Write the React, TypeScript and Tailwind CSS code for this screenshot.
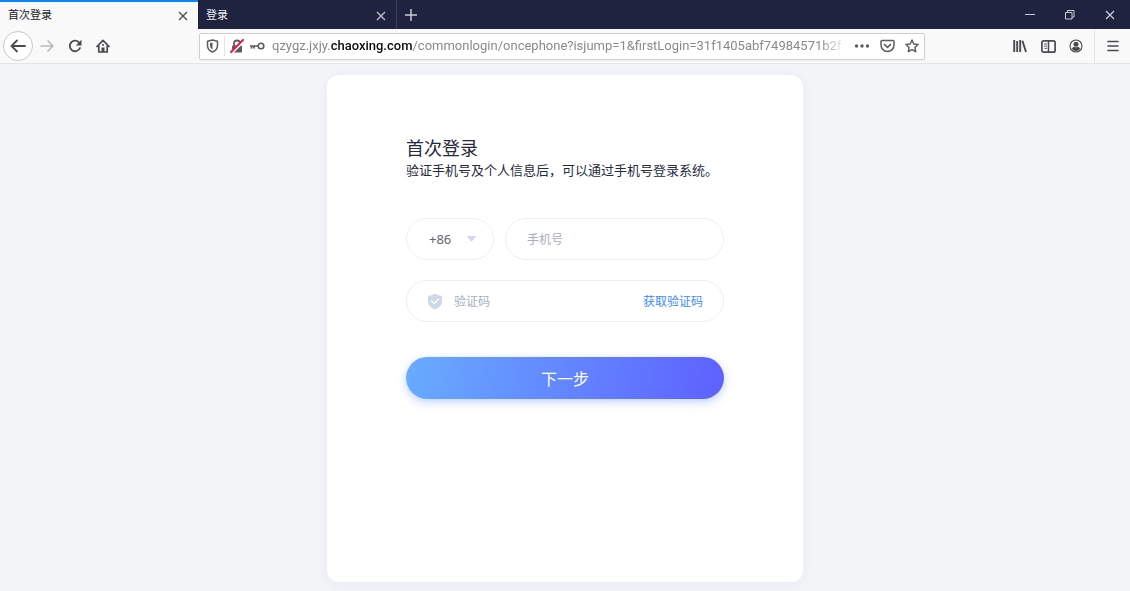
import { useState } from 'react';
import type { ButtonHTMLAttributes, FormEvent } from 'react';
import { clsx } from 'clsx';

// ============================================================================
// Types
// ============================================================================

interface IconButtonProps extends ButtonHTMLAttributes<HTMLButtonElement> {
    label: string;
}

interface TabProps {
    title: string;
    active: boolean;
    onSelect: () => void;
}

// ============================================================================
// Browser chrome
// ============================================================================

function IconButton({ label, className, children, ...rest }: IconButtonProps) {
    return (
        <button
            type="button"
            aria-label={label}
            className={clsx('flex shrink-0 items-center justify-center', className)}
            {...rest}
        >
            {children}
        </button>
    );
}

function CloseIcon() {
    return (
        <svg width="10" height="10" viewBox="0 0 10 10" fill="none" stroke="currentColor" strokeWidth="1.3">
            <path d="M1 1l8 8M9 1L1 9" />
        </svg>
    );
}

function Tab({ title, active, onSelect }: TabProps) {
    return (
        <div
            className={clsx(
                'flex w-[198px] items-center border-t-2 pr-2.5 pl-2 text-[11px]',
                active
                    ? 'border-[#0a84ff] bg-[#f9f9fa] text-[#18191a]'
                    : 'border-[#202340] text-[#f0f0f5]'
            )}
        >
            <button
                type="button"
                role="tab"
                aria-selected={active}
                onClick={onSelect}
                className="h-full flex-1 pb-1 text-left leading-4"
            >
                {title}
            </button>
            <IconButton label="关闭标签页" className={active ? 'text-[#4a4a4f]' : 'text-[#c0c1cc]'}>
                <CloseIcon />
            </IconButton>
        </div>
    );
}

function TabBar() {
    const [current, setCurrent] = useState(0);

    return (
        <div className="flex h-[29px] bg-[#202340] text-[#c9cad4]">
            <div role="tablist" className="flex">
                {['首次登录', '登录'].map((title, index) => (
                    <Tab
                        key={title}
                        title={title}
                        active={current === index}
                        onSelect={() => setCurrent(index)}
                    />
                ))}
            </div>
            <IconButton label="新建标签页" className="w-7 border-l border-[#3d4059]">
                <svg width="14" height="14" viewBox="0 0 14 14" stroke="currentColor" strokeWidth="1.5">
                    <path d="M7 1v12M1 7h12" />
                </svg>
            </IconButton>
            <div className="ml-auto flex">
                <IconButton label="最小化" className="w-10">
                    <svg width="10" height="10" viewBox="0 0 10 10" stroke="currentColor">
                        <path d="M0 4.5h10" />
                    </svg>
                </IconButton>
                <IconButton label="还原" className="w-10">
                    <svg width="10" height="10" viewBox="0 0 10 10" fill="none" stroke="currentColor">
                        <path d="M.5 2.5h6.5v6.5H.5zM2.500 2.500V.5H9v6.500H7" />
                    </svg>
                </IconButton>
                <IconButton label="关闭" className="w-10">
                    <CloseIcon />
                </IconButton>
            </div>
        </div>
    );
}

function AddressBar() {
    const [url, setUrl] = useState(
        'qzygz.jxjy.chaoxing.com/commonlogin/oncephone?isjump=1&firstLogin=31f1405abf74984571b2f'
    );
    const [editing, setEditing] = useState(false);
    const domain = 'chaoxing.com';
    const [before, after = ''] = url.split(domain);

    return (
        <div className="mr-[81px] ml-[82px] flex h-[27px] min-w-0 flex-1 items-center rounded-xs border border-[#cfcfd1] bg-white pr-[5px] pl-1.5 text-[#5c5c61] shadow-xs">
            <svg className="shrink-0" width="13" height="14" viewBox="0 0 13 14" fill="none" stroke="currentColor">
                <path
                    d="M6.500 1L11.500 2.300V6.200C11.500 9.300 9.700 11.700 6.500 13C3.300 11.700 1.500 9.300 1.500 6.200V2.300Z"
                    strokeWidth="1.5"
                    strokeLinejoin="round"
                />
                <path d="M6.500 3.500v7C4.800 9.500 4 8 4 6.200V4.100z" fill="currentColor" stroke="none" />
            </svg>
            <div className="mx-[5px] h-5 w-px shrink-0 bg-[#e3e3e6]" />
            <svg className="shrink-0" width="14" height="14" viewBox="0 0 14 14" fill="none">
                <path d="M4 7V4.500a3 3 0 0 1 6 0V7" stroke="currentColor" strokeWidth="1.800" />
                <rect x="2" y="6.500" width="10" height="7" rx="1" fill="currentColor" />
                <path d="M2.500 13.500L13.500 2.500" stroke="white" strokeWidth="2" />
                <path d="M1 13L13 1" stroke="#f01848" strokeWidth="2" strokeLinecap="round" />
            </svg>
            <svg className="ml-1.5 shrink-0" width="15" height="10" viewBox="0 0 15 10" fill="none" stroke="currentColor">
                <circle cx="11" cy="5" r="2.800" strokeWidth="1.600" />
                <path d="M0 5h8M1.500 5v2.500M4 5v2.500" strokeWidth="1.700" />
            </svg>
            <div className="relative ml-[7px] min-w-0 flex-1 font-['Roboto',sans-serif] text-[13px] leading-5">
                <input
                    aria-label="地址栏"
                    value={editing ? url : ''}
                    onChange={(e) => setUrl(e.target.value)}
                    onFocus={() => setEditing(true)}
                    onBlur={() => setEditing(false)}
                    className="absolute inset-0 w-full bg-transparent outline-none"
                />
                {/* the domain stands out until the field is edited */}
                <div
                    className={clsx(
                        'overflow-hidden whitespace-nowrap text-[#8a8a8e] mask-r-from-95%',
                        editing && 'invisible'
                    )}
                >
                    {before}
                    {url.includes(domain) && <span className="font-medium text-[#0c0c0d]">{domain}</span>}
                    {after}
                </div>
            </div>
            <div className="ml-1.5 flex shrink-0 items-center gap-2.5">
                <IconButton label="页面操作">
                    <svg width="16" height="14" viewBox="0 0 16 14" fill="currentColor">
                        <circle cx="2.500" cy="7" r="1.700" />
                        <circle cx="8" cy="7" r="1.700" />
                        <circle cx="13.500" cy="7" r="1.700" />
                    </svg>
                </IconButton>
                <IconButton label="保存到 Pocket">
                    <svg
                        width="15"
                        height="14"
                        viewBox="0 0 15 14"
                        fill="none"
                        stroke="currentColor"
                        strokeWidth="1.500"
                        strokeLinecap="round"
                        strokeLinejoin="round"
                    >
                        <path d="M2 1.500h11a1 1 0 0 1 1 1V6a6.500 6.500 0 0 1-13 0V2.500a1 1 0 0 1 1-1z" />
                        <path d="M4.500 5.500l3 2.800 3-2.800" strokeWidth="1.700" />
                    </svg>
                </IconButton>
                <IconButton label="加入书签">
                    <svg
                        width="14"
                        height="14"
                        viewBox="0 0 16 16"
                        fill="none"
                        stroke="currentColor"
                        strokeWidth="1.700"
                        strokeLinejoin="round"
                    >
                        <path d="M8 1.200l2.050 4.500 4.850.6-3.600 3.350.95 4.850L8 12.100l-4.250 2.400.95-4.850L1.100 6.300l4.850-.6z" />
                    </svg>
                </IconButton>
            </div>
        </div>
    );
}

function Toolbar() {
    return (
        <div className="flex h-[35px] items-center border-b border-[#e3e4e8] bg-[#f9f9fa] text-[#4a4a4f]">
            <div className="flex items-center pl-[3px]">
                <IconButton label="后退" className="size-[30px] rounded-full border border-[#c8c8ca] bg-white">
                    <svg
                        width="16"
                        height="14"
                        viewBox="0 0 16 14"
                        fill="none"
                        stroke="currentColor"
                        strokeWidth="1.800"
                        strokeLinecap="round"
                        strokeLinejoin="round"
                    >
                        <path d="M15 7H1.500M7 1.500L1.500 7 7 12.500" />
                    </svg>
                </IconButton>
                <IconButton label="前进" className="w-7 text-[#b8b8bb]" disabled>
                    <svg
                        width="14"
                        height="14"
                        viewBox="0 0 14 14"
                        fill="none"
                        stroke="currentColor"
                        strokeWidth="1.600"
                        strokeLinecap="round"
                        strokeLinejoin="round"
                    >
                        <path d="M1 7h12M8 2l5 5-5 5" />
                    </svg>
                </IconButton>
                <IconButton label="刷新" className="w-7">
                    <svg width="14" height="14" viewBox="0 0 14 14" fill="none">
                        <path
                            d="M11.300 3.700A5.300 5.300 0 1 0 12 9"
                            stroke="currentColor"
                            strokeWidth="1.800"
                            strokeLinecap="round"
                        />
                        <path d="M13.500.800v5.700H7.800z" fill="currentColor" />
                    </svg>
                </IconButton>
                <IconButton label="主页" className="w-7">
                    <svg width="14" height="14" viewBox="0 0 14 14" fill="none" stroke="currentColor">
                        <path
                            d="M1 7.500L7 1.300l6 6.200M2.800 7v6h8.400V7"
                            strokeWidth="1.700"
                            strokeLinecap="round"
                            strokeLinejoin="round"
                        />
                        <path d="M5.500 13V8.500h3V13z" fill="currentColor" stroke="none" />
                        <path d="M6 6h2" strokeWidth="1.500" />
                    </svg>
                </IconButton>
            </div>
            <AddressBar />
            <div className="flex h-full items-center">
                <IconButton label="我的足迹" className="w-7">
                    <svg width="14" height="14" viewBox="0 0 14 14" stroke="currentColor" strokeWidth="1.900">
                        <path d="M1.200 1v12M4.200 2v11M7.200 1v12M9.400 1.700L13 13" />
                    </svg>
                </IconButton>
                <IconButton label="侧栏" className="w-7">
                    <svg width="15" height="13" viewBox="0 0 15 13" fill="none" stroke="currentColor">
                        <rect x=".9" y=".9" width="13.200" height="11.200" rx="1.700" strokeWidth="1.700" />
                        <path d="M7.500 1v11" strokeWidth="1.500" />
                        <path d="M3 4h3M3 6.200h3M3.500 8.400h2.500" strokeWidth=".9" />
                    </svg>
                </IconButton>
                <IconButton label="账户" className="w-7">
                    <svg width="14" height="14" viewBox="0 0 14 14" fill="currentColor">
                        <circle cx="7" cy="7" r="6" fill="none" stroke="currentColor" strokeWidth="1.100" />
                        <circle cx="7" cy="5.200" r="2.500" />
                        <path d="M2.900 10c.5-1.800 1.900-2 2.700-1.900q1.400.5 2.800 0c.8-.1 2.200.1 2.700 1.900A5 5 0 0 1 2.900 10z" />
                    </svg>
                </IconButton>
                <IconButton label="打开菜单" className="ml-1 h-full w-9 border-l border-[#e6e6e9]">
                    <svg width="12" height="12" viewBox="0 0 12 12" stroke="currentColor" strokeWidth="1.600" strokeLinecap="round">
                        <path d="M1 1.500h10M1 6h10M1 10.500h10" />
                    </svg>
                </IconButton>
            </div>
        </div>
    );
}

// ============================================================================
// Login form
// ============================================================================

function LoginForm() {
    const [phone, setPhone] = useState('');
    const [code, setCode] = useState('');

    const handleSubmit = (e: FormEvent) => {
        e.preventDefault();
    };

    return (
        <form onSubmit={handleSubmit} className="mt-[37px] text-[12px]">
            <div className="flex gap-[11px]">
                <div className="relative w-[88px] shrink-0">
                    <select
                        aria-label="国家/地区代码"
                        className="h-[42px] w-full appearance-none rounded-full border border-[#edeff5] bg-transparent pt-0.5 pl-[22px] font-['Noto_Sans'] text-[13px] text-[#62666f] outline-none"
                    >
                        <option>+86</option>
                        <option>+852</option>
                        <option>+853</option>
                    </select>
                    <svg
                        className="pointer-events-none absolute top-[18px] right-[18px] text-[#ced8e6]"
                        width="9"
                        height="6"
                        viewBox="0 0 9 6"
                        fill="currentColor"
                    >
                        <path d="M1 0h7q1.200 0 .5 1L5.200 5q-.7.800-1.400 0L.5 1Q-.2 0 1 0z" />
                    </svg>
                </div>
                <input
                    type="tel"
                    aria-label="手机号"
                    placeholder="手机号"
                    value={phone}
                    onChange={(e) => setPhone(e.target.value)}
                    className="h-[42px] min-w-0 flex-1 rounded-full border border-[#edeff5] px-[21px] pb-0.5 outline-none placeholder:text-[#a3afc0]"
                />
            </div>

            <div className="mt-5 flex h-[42px] items-center rounded-full border border-[#edeff5] px-5">
                <svg width="16" height="17" viewBox="0 0 16 17" fill="none">
                    <path
                        d="M8 .5Q11 2.700 14.300 2.800q.7 0 .7.700V8Q15 14 8 16.500Q1 14 1 8V3.500q0-.7.7-.7Q5 2.700 8 .5z"
                        fill="#ced8e6"
                    />
                    <path
                        d="M4.700 8l2.600 2.600 4.200-4.300"
                        stroke="white"
                        strokeWidth="1.300"
                        strokeLinecap="round"
                        strokeLinejoin="round"
                    />
                </svg>
                <input
                    aria-label="验证码"
                    placeholder="验证码"
                    value={code}
                    onChange={(e) => setCode(e.target.value)}
                    className="ml-[11px] min-w-0 flex-1 outline-none placeholder:text-[#a3afc0]"
                />
                <button type="button" className="text-[#3d8bff]">
                    获取验证码
                </button>
            </div>

            <button
                type="submit"
                className="mt-[35px] h-[42px] w-full rounded-full bg-linear-[100deg] from-[#68acff] to-[#5e60ff] text-base text-white shadow-[0_3px_10px_rgba(70,130,255,0.35)]"
            >
                下一步
            </button>
        </form>
    );
}

// ============================================================================
// Page
// ============================================================================

export default function App() {
    return (
        <div className="flex min-h-screen flex-col bg-[#f2f4f8] font-['Noto_Sans_CJK_SC',sans-serif]">
            <header>
                <TabBar />
                <Toolbar />
            </header>
            <main className="flex flex-1 justify-center px-4 pt-[11px] pb-[9px]">
                <section className="w-full max-w-[476px] rounded-xl bg-white px-[79px] pt-[60px] pb-16 text-[#262a40] shadow-[0_2px_12px_rgba(40,60,110,0.05)]">
                    <h1 className="text-[18px] leading-6">首次登录</h1>
                    <p className="text-[13px] leading-[22px] whitespace-nowrap">
                        验证手机号及个人信息后，可以通过手机号登录系统。
                    </p>
                    <LoginForm />
                </section>
            </main>
        </div>
    );
}
